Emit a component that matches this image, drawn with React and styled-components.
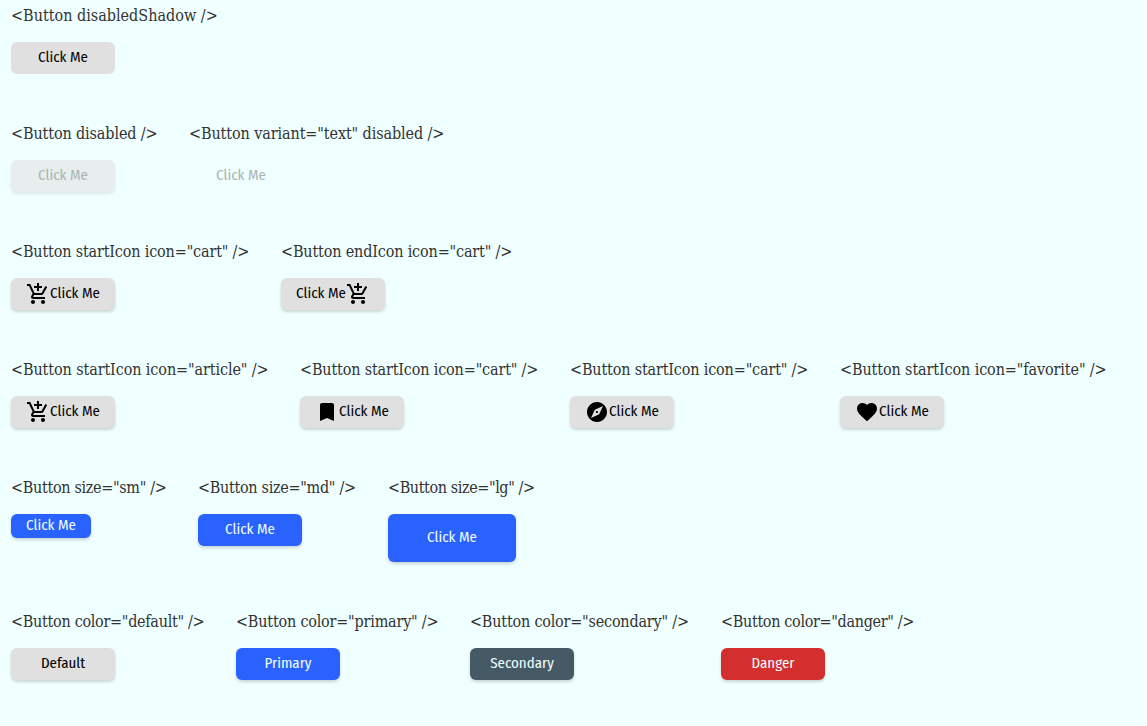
import React from 'react';
import styled, { createGlobalStyle } from 'styled-components';
import { MdAddShoppingCart, MdBookmark, MdExplore, MdFavorite } from 'react-icons/md';

const GlobalStyle = createGlobalStyle`
  * { box-sizing: border-box; }
  body { margin: 0; background: #f0ffff; }
`;

const Page = styled.main`
  display: flex;
  flex-direction: column;
  gap: 48px;
  padding: 4px 11px 24px;
`;

const Row = styled.section`
  display: flex;
  align-items: flex-start;
  gap: 32px;
`;

const Example = styled.div`
  display: flex;
  flex-direction: column;
  align-items: flex-start;
  gap: 14px;
  width: ${({ $width }) => $width}px;
`;

const Code = styled.span`
  font-family: "Roboto Slab", "DejaVu Serif Condensed", "DejaVu Serif", serif;
  font-size: 16px;
  font-stretch: 75%;
  line-height: 24px;
  letter-spacing: ${({ $tracking }) => $tracking || 0}px;
  color: #333;
  white-space: nowrap;
`;

const palette = {
  default: { background: '#e0e0e0', text: '#000' },
  primary: { background: '#2962ff', text: '#f0ffff' },
  secondary: { background: '#455a64', text: '#f0ffff' },
  danger: { background: '#d32f2f', text: '#f0ffff' },
};

const sizes = {
  sm: { width: 80, height: 24 },
  md: { width: 104, height: 32 },
  lg: { width: 128, height: 48 },
};

const Button = styled.button`
  display: flex;
  align-items: center;
  justify-content: center;
  width: ${({ $size = 'md' }) => sizes[$size].width}px;
  height: ${({ $size = 'md' }) => sizes[$size].height}px;
  padding: 0;
  border: 0;
  border-radius: 6px;
  font-family: "Fira Sans Condensed", "Open Sans Condensed", "Roboto Condensed", Roboto, sans-serif;
  font-size: 14.9px;
  font-weight: 400;
  line-height: 18px;
  color: ${({ $color = 'default' }) => palette[$color].text};
  background: ${({ $color = 'default', $text }) => ($text ? 'transparent' : palette[$color].background)};
  box-shadow: ${({ $flat, $text }) => ($flat || $text ? 'none' : '0 2px 3px rgba(51, 51, 51, 0.2)')};

  &:disabled {
    color: #a9b5b5;
    background: ${({ $text }) => ($text ? 'transparent' : '#e7eeed')};
    box-shadow: ${({ $text }) => ($text ? 'none' : '0 2px 3px rgba(51, 51, 51, 0.1)')};
  }

  svg { width: 24px; height: 24px; flex: none; }
`;

const ButtonText = styled.span`
  padding-bottom: 2px;
`;

const rows = [
  [{ code: '<Button disabledShadow />', width: 206, flat: true }],
  [
    { code: '<Button disabled />', width: 146, tracking: -0.12, disabled: true },
    { code: '<Button variant="text" disabled />', width: 255, tracking: -0.1, disabled: true, text: true },
  ],
  [
    { code: '<Button startIcon icon="cart" />', width: 238, tracking: -0.16, start: MdAddShoppingCart },
    { code: '<Button endIcon icon="cart" />', width: 231, tracking: -0.16, end: MdAddShoppingCart },
  ],
  [
    { code: '<Button startIcon icon="article" />', width: 257, tracking: -0.1, start: MdAddShoppingCart },
    { code: '<Button startIcon icon="cart" />', width: 238, tracking: -0.16, start: MdBookmark },
    { code: '<Button startIcon icon="cart" />', width: 238, tracking: -0.16, start: MdExplore },
    { code: '<Button startIcon icon="favorite" />', width: 267, tracking: -0.11, start: MdFavorite },
  ],
  [
    { code: '<Button size="sm" />', width: 155, tracking: -0.32, size: 'sm', color: 'primary' },
    { code: '<Button size="md" />', width: 158, tracking: -0.3, size: 'md', color: 'primary' },
    { code: '<Button size="lg" />', width: 147, tracking: -0.4, size: 'lg', color: 'primary' },
  ],
  [
    { code: '<Button color="default" />', width: 193, tracking: -0.29, label: 'Default' },
    { code: '<Button color="primary" />', width: 202, tracking: -0.2, color: 'primary', label: 'Primary' },
    { code: '<Button color="secondary" />', width: 219, tracking: -0.2, color: 'secondary', label: 'Secondary' },
    { code: '<Button color="danger" />', width: 193, tracking: -0.33, color: 'danger', label: 'Danger' },
  ],
];

function ButtonExample({ code, width, tracking, start: Start, end: End, label = 'Click Me', size, color, flat, text, disabled }) {
  return (
    <Example $width={width}>
      <Code $tracking={tracking}>{code}</Code>
      <Button $size={size} $color={color} $flat={flat} $text={text} disabled={disabled}>
        {Start && <Start />}
        <ButtonText>{label}</ButtonText>
        {End && <End />}
      </Button>
    </Example>
  );
}

export default function App() {
  return (
    <>
      <GlobalStyle />
      <Page>
        {rows.map((examples, r) => (
          <Row key={r}>
            {examples.map((example, i) => <ButtonExample key={i} {...example} />)}
          </Row>
        ))}
      </Page>
    </>
  );
}
